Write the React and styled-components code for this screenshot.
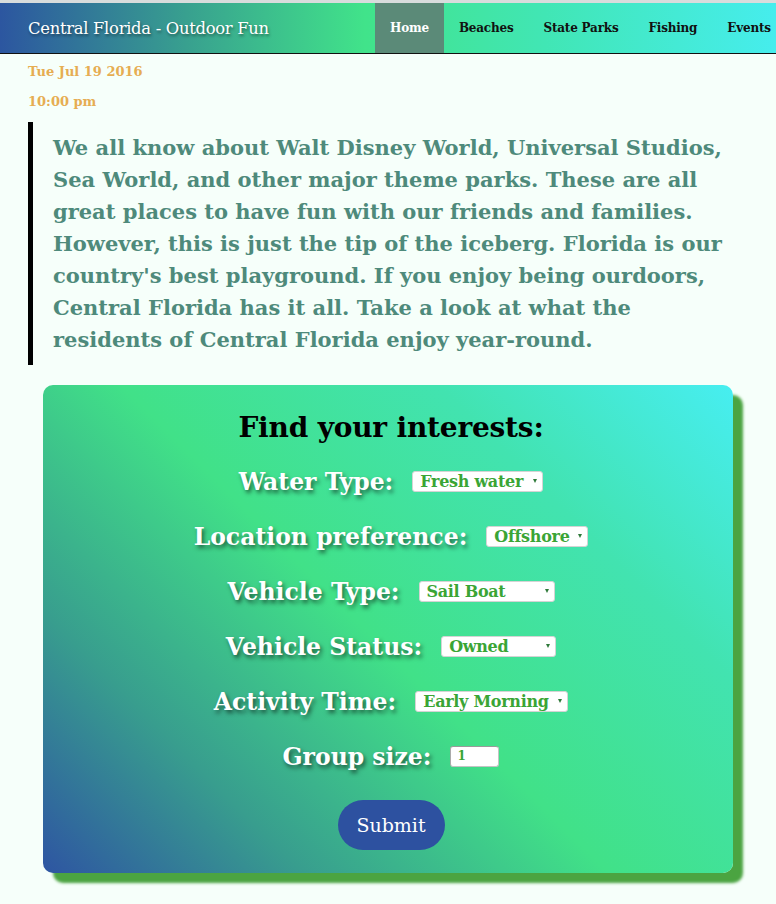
import React from 'react';
import styled, { createGlobalStyle } from 'styled-components';

const GlobalStyle = createGlobalStyle`
  html, body {
    margin: 0;
    padding: 0;
    background: #f6fffa;
    font-family: "DejaVu Serif", "Liberation Serif", serif;
  }
`;

const Page = styled.div`
  width: 776px;
  min-height: 904px;
  background: #f6fffa;
  border-top: 3px solid #d8dcdc;
  box-sizing: border-box;
  overflow: hidden;
`;

const Header = styled.header`
  display: flex;
  align-items: stretch;
  height: 50px;
  border-bottom: 1px solid #111;
  overflow: hidden;
  background: linear-gradient(90deg, #2c56a0 0%, #38a08f 24%, #41e38a 47%, #41e6b4 70%, #46eded 100%);
`;

const Brand = styled.div`
  flex: 0 0 347px;
  display: flex;
  align-items: center;
  padding-left: 28px;
  color: #fff;
  font-size: 16.4px;
  letter-spacing: -0.3px;
  text-shadow: 1px 2px 3px rgba(0, 0, 0, 0.45);
`;

const Nav = styled.nav`
  display: flex;
  align-items: stretch;
  flex-shrink: 0;
`;

const NavItem = styled.a`
  display: flex;
  align-items: center;
  padding: 0 15px;
  font-size: 12px;
  font-weight: bold;
  letter-spacing: -0.2px;
  color: ${(p) => (p.$active ? '#fff' : '#111')};
  background: ${(p) => (p.$active ? '#5b8a78' : 'transparent')};
  text-decoration: none;
`;

const Meta = styled.div`
  padding: 10px 0 0 28px;
  color: #e6ad52;
  font-size: 13px;
  font-weight: bold;
  display: flex;
  flex-direction: column;
  gap: 15px;
`;

const Quote = styled.blockquote`
  margin: 13px 0 0 28px;
  padding: 10px 20px 9px 20px;
  border-left: 5px solid #000;
  color: #4e8a7b;
  font-size: 21px;
  font-weight: bold;
  line-height: 32px;
  white-space: nowrap;
`;

const Line = styled.span`
  display: block;
`;

const CardWrap = styled.div`
  padding: 20px 0 0 43px;
`;

const Card = styled.form`
  width: 690px;
  height: 488px;
  box-sizing: border-box;
  border-radius: 10px;
  background: linear-gradient(45deg, #2e55a2 0%, #389d8e 22%, #41e188 48%, #42e3b0 75%, #47eef1 100%);
  box-shadow: 10px 10px 3px #4ba441;
  display: flex;
  flex-direction: column;
  align-items: center;
  padding: 26px 0 0 6px;
`;

const Title = styled.h2`
  margin: 0 0 10px;
  font-size: 28px;
  font-weight: bold;
  color: #000;
  letter-spacing: -0.2px;
`;

const Row = styled.div`
  display: flex;
  align-items: center;
  justify-content: center;
  height: 55px;
  gap: 19px;
`;

const Label = styled.label`
  color: #fff;
  font-size: 23.5px;
  font-weight: bold;
  text-shadow: 2px 3px 4px rgba(0, 0, 0, 0.55);
`;

const Select = styled.div`
  position: relative;
  display: flex;
  align-items: center;
  height: 21px;
  width: ${(p) => p.$w}px;
  box-sizing: border-box;
  padding: 0 14px 0 7px;
  background: #fff;
  border: 1px solid #d4d4d4;
  border-radius: 3px;
  color: #3aa535;
  font-size: 16px;
  font-weight: bold;
  letter-spacing: -0.3px;
  white-space: nowrap;
  overflow: hidden;

  &::after {
    content: '';
    position: absolute;
    right: 5px;
    top: 7px;
    border-left: 2.5px solid transparent;
    border-right: 2.5px solid transparent;
    border-top: 4px solid #2f7a3a;
  }
`;

const NumberInput = styled.div`
  width: 49px;
  height: 21px;
  box-sizing: border-box;
  padding: 3px 6px;
  background: #fff;
  border: 1px solid #c4c4c4;
  border-top-color: #9a9a9a;
  border-left-color: #aaa;
  border-radius: 3px;
  color: #3aa535;
  font-size: 12px;
  font-weight: bold;
  line-height: 13px;
`;

const Submit = styled.button`
  margin-top: 16px;
  width: 107px;
  height: 50px;
  border: none;
  border-radius: 25px;
  background: #2d51a0;
  color: #fff;
  font-family: "DejaVu Serif", serif;
  font-size: 19px;
`;

const quoteLines = [
  'We all know about Walt Disney World, Universal Studios,',
  'Sea World, and other major theme parks. These are all',
  'great places to have fun with our friends and families.',
  'However, this is just the tip of the iceberg. Florida is our',
  "country's best playground. If you enjoy being ourdoors,",
  'Central Florida has it all. Take a look at what the',
  'residents of Central Florida enjoy year-round.',
];

const fields = [
  { label: 'Water Type:', value: 'Fresh water', w: 131 },
  { label: 'Location preference:', value: 'Offshore', w: 102 },
  { label: 'Vehicle Type:', value: 'Sail Boat', w: 136 },
  { label: 'Vehicle Status:', value: 'Owned', w: 115 },
  { label: 'Activity Time:', value: 'Early Morning', w: 153 },
];

export default function App() {
  return (
    <Page>
      <GlobalStyle />
      <Header>
        <Brand>Central Florida - Outdoor Fun</Brand>
        <Nav>
          <NavItem $active>Home</NavItem>
          <NavItem>Beaches</NavItem>
          <NavItem>State Parks</NavItem>
          <NavItem>Fishing</NavItem>
          <NavItem>Events</NavItem>
        </Nav>
      </Header>
      <Meta>
        <span>Tue Jul 19 2016</span>
        <span>10:00 pm</span>
      </Meta>
      <Quote>
        {quoteLines.map((l) => (
          <Line key={l}>{l}</Line>
        ))}
      </Quote>
      <CardWrap>
        <Card>
          <Title>Find your interests:</Title>
          {fields.map((f) => (
            <Row key={f.label}>
              <Label>{f.label}</Label>
              <Select $w={f.w}>{f.value}</Select>
            </Row>
          ))}
          <Row>
            <Label>Group size:</Label>
            <NumberInput>1</NumberInput>
          </Row>
          <Submit type="button">Submit</Submit>
        </Card>
      </CardWrap>
    </Page>
  );
}
